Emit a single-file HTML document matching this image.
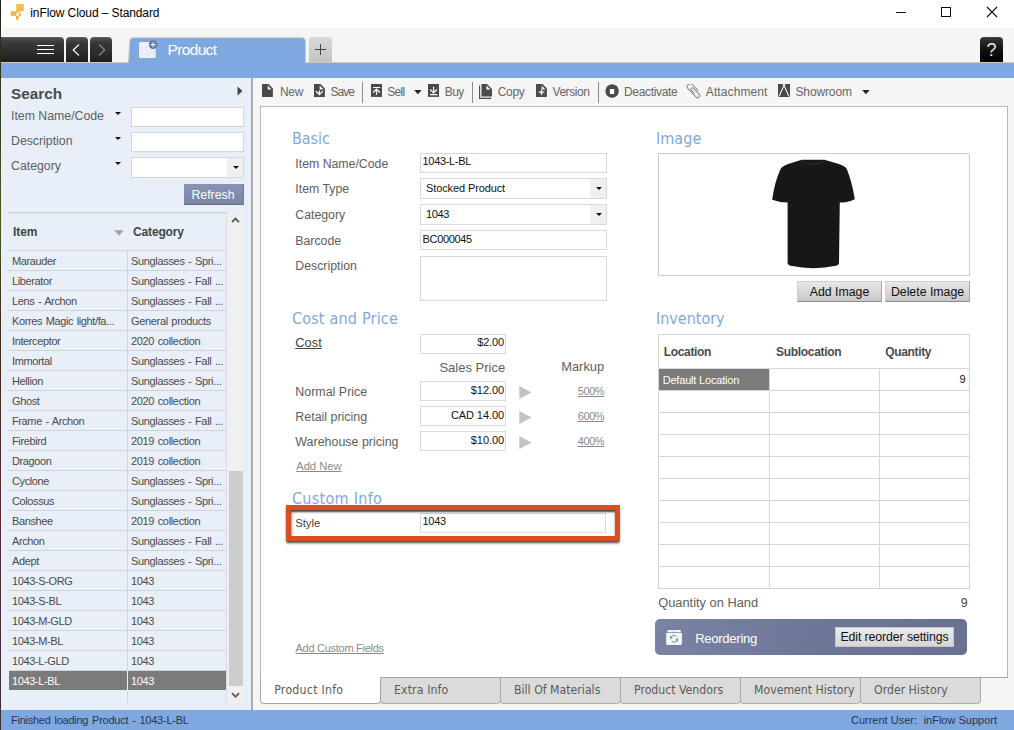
<!DOCTYPE html>
<html lang="en">
<head>
<meta charset="utf-8">
<title>inFlow Cloud – Standard</title>
<style>
*{box-sizing:border-box;margin:0;padding:0}
html,body{width:1014px;height:730px;overflow:hidden;background:#fff}
body{font-family:"Liberation Sans",sans-serif;font-size:12px;color:#505050}
#app{position:absolute;left:0;top:0;width:1014px;height:730px;overflow:hidden}
#app *{position:absolute}
#app svg *{position:static}
.t{white-space:pre;line-height:1;display:block}
.r{text-align:right}
/* title / tab bar */
#titlebar{left:0;top:0;width:1014px;height:28px;background:#fff}
#leftedge{left:0;top:0;width:1px;height:730px;background:linear-gradient(#1c241c,#4a5a20 30%,#3a2a1a 45%,#5a2a3a 70%,#38303a)}
#tabbar{left:2px;top:28px;width:1012px;height:34px;background:#f5f5f5}
#tabline{left:1px;top:62px;width:1013px;height:1px;background:#cfcbc3}
.dk{top:37px;height:25px;background:linear-gradient(#4e4e4e,#383838 22%,#2a2a2a 70%,#1c1c1c);border-radius:4px 4px 0 0;border-top:1px solid #5a5a5a}
#blueband{left:1px;top:63px;width:1013px;height:15px;background:#7fa8e0}
#ptab{left:129px;top:37px;width:177px;height:27px;background:#7fa8e0;border-radius:3px 3px 0 0;border-top:1px solid #cfc9c0;border-left:1px solid #cfc9c0}
#plus{left:309px;top:37px;width:23px;height:25px;background:linear-gradient(#d9d9d9,#c3c3c3);border-radius:3px 3px 0 0}
/* left panel */
#left{left:1px;top:78px;width:250px;height:632px;background:#e9eff9}
#split{left:251px;top:78px;width:2px;height:632px;background:linear-gradient(90deg,#a6a6a6 50%,#b0b0b0 50%)}
.lbl{font-size:12.3px;color:#5e5e5e}
.inp{background:#fff;border:1px solid #d6d6d6}
.arr{width:0;height:0;border-left:3px solid transparent;border-right:3px solid transparent;border-top:3px solid #111}
.row{left:8px;width:218px;height:20px;border-top:1px solid #d3d3d3}
.row .c1{left:4px;top:5px;font-size:11px;letter-spacing:-0.38px;word-spacing:0.9px;color:#4a4a4a}
.row .c2{left:123px;top:5px;font-size:11px;letter-spacing:-0.33px;word-spacing:0.8px;color:#4a4a4a}
.row .vs{left:119px;top:0;width:1px;height:19px;background:#d3d3d3}
.row.sel{background:linear-gradient(#7b7b7b,#7b7b7b) no-repeat 1px 0/217px 100%}
.row.sel .c1,.row.sel .c2{color:#fff}
.row.sel .vs{background:#e9eff9}
/* main */
#main{left:253px;top:78px;width:761px;height:632px;background:#f5f5f5}
#content{left:260px;top:106px;width:748px;height:572px;background:#fff;border:1px solid #b9b9b9;border-bottom-color:#a4a4a4}
.tb{font-size:12px;color:#666}
.sep{width:1px;height:21px;background:#8c8c8c;top:82px}
.h{font-size:16px;color:#7fa8e0;font-family:"DejaVu Sans Condensed","DejaVu Sans","Liberation Sans",sans-serif;font-stretch:condensed}
.fl{font-size:12.3px;color:#5e5e5e}
.fi{background:#fff;border:1px solid #d9d9d9}
.fv{font-size:11px;color:#111;letter-spacing:-0.34px}
.cb{width:17px;background:#f0f0f0}
.btn{background:linear-gradient(#e8e8e8,#d4d4d4 60%,#c8c8c8);border:1px solid #cfcfcf;border-bottom:1px solid #8a8a8a;border-right:1px solid #a8a8a8}
.btn .t{font-size:12.3px;color:#111;left:0;width:100%;text-align:center}
.gh{background:#d6d6d6}
.btab{background:#dbdbdb;border:1px solid #ababab;border-top:1px solid #a4a4a4;border-radius:0 0 4px 4px}
.bt{font-family:"DejaVu Sans Condensed","DejaVu Sans","Liberation Sans",sans-serif;font-stretch:condensed;font-size:12.3px;color:#5a5a5a}
#status{left:1px;top:710px;width:1013px;height:20px;background:#7fa8e0}
.st{font-size:11px;color:#2c3550}
</style>
</head>
<body>
<div id="app">
<div id="titlebar"></div>
<svg style="left:10px;top:3px" width="16" height="18" viewBox="0 0 16 18">
<defs><linearGradient id="ig" x1="0" y1="0" x2="1" y2="1"><stop offset="0" stop-color="#f7cf62"/><stop offset="1" stop-color="#eeb23a"/></linearGradient></defs>
<rect x="6" y="1" width="7.7" height="7.2" fill="url(#ig)"/>
<rect x="0.8" y="8.2" width="4.4" height="4.8" fill="#f1b946"/>
<path d="M5 8.2H9.8V9.7H7.2L6.4 10.5V13H5z" fill="#f0b541"/>
<circle cx="10" cy="11.6" r="1.25" fill="#f0b541"/>
<path d="M10 11.6L7.3 14.2" stroke="#f0b541" stroke-width="1.6" fill="none"/>
<rect x="6" y="13" width="2.4" height="3.8" fill="#efb03a"/>
</svg>
<span class="t " style="left:30.3px;top:6.84px;font-size:12px;color:#000;letter-spacing:-0.1px">inFlow Cloud – Standard</span>
<div class="" style="left:896px;top:12px;width:10px;height:1px;background:#111"></div>
<div class="" style="left:941px;top:7px;width:10px;height:10px;border:1px solid #111"></div>
<svg style="left:986px;top:6px" width="12" height="12" viewBox="0 0 12 12"><path d="M1 1l10 10M11 1L1 11" stroke="#111" stroke-width="1.1" fill="none"/></svg>
<div id="tabbar"></div><div id="tabline"></div><div id="blueband"></div>
<div class="dk" style="left:1px;top:37px;width:63px;height:25px;border-radius:0 4px 0 0"></div>
<div class="" style="left:37px;top:45px;width:17px;height:1px;background:#fff"></div><div class="" style="left:37px;top:49px;width:17px;height:1px;background:#fff"></div><div class="" style="left:37px;top:53px;width:17px;height:1px;background:#fff"></div>
<div class="dk" style="left:66px;top:37px;width:22px;height:25px;"></div>
<svg style="left:72px;top:44px" width="8" height="12" viewBox="0 0 8 12"><path d="M7 0.5L1.2 6L7 11.5" stroke="#fff" stroke-width="1.1" fill="none"/></svg>
<div class="dk" style="left:90px;top:37px;width:22px;height:25px;"></div>
<svg style="left:98px;top:44px" width="8" height="12" viewBox="0 0 8 12"><path d="M1 0.5L6.8 6L1 11.5" stroke="#8e8e8e" stroke-width="1.1" fill="none"/></svg>
<svg style="left:127px;top:36px" width="181" height="28" viewBox="0 0 181 28"><path d="M1.5 27.5L2.7 5Q3 1.7 6 1.7H176.2L178.5 4V27.5z" fill="#7fa8e0"/><path d="M1.5 26.2L2.7 5Q3 1.7 6 1.7H176.2L178.5 4V26.2" fill="none" stroke="#d3cdc3" stroke-width="1"/></svg>
<svg style="left:137px;top:39px" width="22" height="22" viewBox="0 0 22 22">
<rect x="2" y="3.6" width="16.8" height="16.4" rx="1.5" fill="#6f90c8"/>
<rect x="2" y="3" width="16.8" height="16.2" rx="1.5" fill="#e9effa"/>
<rect x="2.5" y="5.4" width="15.8" height="0.8" fill="#f8faff"/>
<circle cx="16.1" cy="5.6" r="4.3" fill="#68759a"/>
<path d="M16.1 3v5.2M13.5 5.6h5.2" stroke="#f4f6fb" stroke-width="1.1"/>
</svg>
<span class="t " style="left:167.5px;top:42.08px;font-size:15.5px;color:#fff;letter-spacing:-0.65px">Product</span>
<div id="plus"></div>
<div class="" style="left:315px;top:49px;width:11px;height:1px;background:#444"></div><div class="" style="left:320px;top:44px;width:1px;height:11px;background:#444"></div>
<div class="dk" style="left:980px;top:37px;width:23px;height:25px;background:linear-gradient(#333,#111 50%,#000);border-top-color:#444"></div>
<span class="t " style="left:0px;top:40.96px;font-size:18px;color:#e8e8e8;left:980px;width:23px;text-align:center">?</span>
<div id="left"></div><div id="split"></div>
<span class="t " style="left:11px;top:86.45px;font-size:15.3px;font-weight:bold;color:#4a4a4a">Search</span>
<svg style="left:237.3px;top:85.8px" width="6" height="10" viewBox="0 0 6 10"><path d="M0.5 0.5L5.5 5L0.5 9.5z" fill="#444"/></svg>
<span class="t lbl" style="left:11px;top:109.59px;font-size:12.3px;">Item Name/Code</span>
<div class="arr" style="left:114.6px;top:111.8px;width:6px;height:3px;width:0;height:0"></div>
<span class="t lbl" style="left:11px;top:134.59px;font-size:12.3px;">Description</span>
<div class="arr" style="left:114.6px;top:136.8px;width:6px;height:3px;width:0;height:0"></div>
<span class="t lbl" style="left:11px;top:159.59px;font-size:12.3px;">Category</span>
<div class="arr" style="left:114.6px;top:161.8px;width:6px;height:3px;width:0;height:0"></div>
<div class="inp" style="left:131px;top:107px;width:113px;height:20px;"></div>
<div class="inp" style="left:131px;top:132px;width:113px;height:20px;"></div>
<div class="inp" style="left:131px;top:157px;width:113px;height:21px;"></div>
<div class="" style="left:227px;top:158px;width:16px;height:19px;background:#f0f0f0"></div>
<div class="arr" style="left:232.5px;top:166px;width:6px;height:3px;width:0;height:0"></div>
<div class="" style="left:184px;top:184px;width:60px;height:21px;background:linear-gradient(#8a93b3,#7a84a6);border-bottom:1px solid #6a6a6e;border-right:1px solid #727b9c"></div>
<span class="t " style="left:0px;top:188.89px;font-size:12.3px;left:183px;width:60px;text-align:center;color:#fff">Refresh</span>
<div class="" style="left:8px;top:212px;width:219px;height:1px;background:#d0d0d0"></div>
<div class="" style="left:8px;top:213px;width:219px;height:1px;background:#e2e4e8"></div>
<span class="t " style="left:13px;top:226.34px;font-size:12px;font-weight:bold;color:#444;letter-spacing:-0.1px">Item</span>
<svg style="left:114px;top:229.5px" width="10" height="6" viewBox="0 0 10 6"><path d="M0.3 0.3h9.4L5 5.7z" fill="#a2a2a2"/></svg>
<span class="t " style="left:133px;top:226.34px;font-size:12px;font-weight:bold;color:#444;letter-spacing:-0.15px">Category</span>
<div class="row" style="top:250px"><span class="t c1">Marauder</span><i class="vs"></i><span class="t c2">Sunglasses - Spri...</span></div>
<div class="row" style="top:270px"><span class="t c1">Liberator</span><i class="vs"></i><span class="t c2">Sunglasses - Fall ...</span></div>
<div class="row" style="top:290px"><span class="t c1">Lens - Archon</span><i class="vs"></i><span class="t c2">Sunglasses - Fall ...</span></div>
<div class="row" style="top:310px"><span class="t c1">Korres Magic light/fa...</span><i class="vs"></i><span class="t c2">General products</span></div>
<div class="row" style="top:330px"><span class="t c1">Interceptor</span><i class="vs"></i><span class="t c2">2020 collection</span></div>
<div class="row" style="top:350px"><span class="t c1">Immortal</span><i class="vs"></i><span class="t c2">Sunglasses - Fall ...</span></div>
<div class="row" style="top:370px"><span class="t c1">Hellion</span><i class="vs"></i><span class="t c2">Sunglasses - Spri...</span></div>
<div class="row" style="top:390px"><span class="t c1">Ghost</span><i class="vs"></i><span class="t c2">2020 collection</span></div>
<div class="row" style="top:410px"><span class="t c1">Frame - Archon</span><i class="vs"></i><span class="t c2">Sunglasses - Fall ...</span></div>
<div class="row" style="top:430px"><span class="t c1">Firebird</span><i class="vs"></i><span class="t c2">2019 collection</span></div>
<div class="row" style="top:450px"><span class="t c1">Dragoon</span><i class="vs"></i><span class="t c2">2019 collection</span></div>
<div class="row" style="top:470px"><span class="t c1">Cyclone</span><i class="vs"></i><span class="t c2">Sunglasses - Spri...</span></div>
<div class="row" style="top:490px"><span class="t c1">Colossus</span><i class="vs"></i><span class="t c2">Sunglasses - Spri...</span></div>
<div class="row" style="top:510px"><span class="t c1">Banshee</span><i class="vs"></i><span class="t c2">2019 collection</span></div>
<div class="row" style="top:530px"><span class="t c1">Archon</span><i class="vs"></i><span class="t c2">Sunglasses - Fall ...</span></div>
<div class="row" style="top:550px"><span class="t c1">Adept</span><i class="vs"></i><span class="t c2">Sunglasses - Spri...</span></div>
<div class="row" style="top:570px"><span class="t c1">1043-S-ORG</span><i class="vs"></i><span class="t c2">1043</span></div>
<div class="row" style="top:590px"><span class="t c1">1043-S-BL</span><i class="vs"></i><span class="t c2">1043</span></div>
<div class="row" style="top:610px"><span class="t c1">1043-M-GLD</span><i class="vs"></i><span class="t c2">1043</span></div>
<div class="row" style="top:630px"><span class="t c1">1043-M-BL</span><i class="vs"></i><span class="t c2">1043</span></div>
<div class="row" style="top:650px"><span class="t c1">1043-L-GLD</span><i class="vs"></i><span class="t c2">1043</span></div>
<div class="row sel" style="top:670px"><span class="t c1">1043-L-BL</span><i class="vs"></i><span class="t c2">1043</span></div>
<div class="row" style="top:690px;height:13px;border-top-color:transparent"><i class="vs" style="height:12px"></i></div>
<div class="" style="left:226px;top:213px;width:1px;height:490px;background:#dadcdf"></div>
<div class="" style="left:227px;top:212px;width:17px;height:491px;background:#f0f0f0"></div>
<div class="" style="left:228.5px;top:471px;width:14.5px;height:215px;background:#cdcdcd"></div>
<svg style="left:230px;top:216px" width="11" height="8" viewBox="0 0 11 8"><path d="M2 6.2L5.5 2.6L9 6.2" stroke="#555" stroke-width="1.8" fill="none"/></svg>
<svg style="left:230px;top:690.5px" width="11" height="8" viewBox="0 0 11 8"><path d="M2 2.2L5.5 5.8L9 2.2" stroke="#555" stroke-width="1.8" fill="none"/></svg>
<div id="main"></div>
<svg style="left:262px;top:84px" width="12" height="13" viewBox="0 0 12 13"><path d="M0 0H6.5L10.9 4.6V13H0z" fill="#4a4a4a"/><path d="M5.7 1.5V5.4H9.4z" fill="#fafafa"/></svg>
<span class="t tb" style="left:280px;top:85.64px;font-size:12px;letter-spacing:-0.3px">New</span>
<svg style="left:314px;top:84px" width="12" height="13" viewBox="0 0 12 13"><path d="M0 0H6.5L10.9 4.6V13H0z" fill="#4a4a4a"/><path d="M5.7 1.5V5.4H9.4z" fill="#fafafa"/><path d="M5.4 6.6v4M2 7.2l3.4 3.5l3.4-3.5" stroke="#fff" stroke-width="1.25" fill="none"/></svg>
<span class="t tb" style="left:330.4px;top:85.64px;font-size:12px;letter-spacing:-0.95px">Save</span>
<div class="sep" style="left:362px;top:82px;width:1px;height:21px;"></div>
<svg style="left:371px;top:84px" width="11" height="13" viewBox="0 0 11 13"><rect width="11" height="12.9" fill="#4a4a4a"/><path d="M1.9 3.5h7.3M5.5 11V5.4M2.1 8.5l3.4-3.3l3.4 3.3" stroke="#fff" stroke-width="1.2" fill="none"/></svg>
<span class="t tb" style="left:387.3px;top:85.64px;font-size:12px;letter-spacing:-0.75px">Sell</span>
<svg style="left:413.5px;top:90px" width="8" height="5" viewBox="0 0 8 5"><path d="M0.2 0h7.4L3.9 4.3z" fill="#222"/></svg>
<svg style="left:428px;top:84px" width="11" height="13" viewBox="0 0 11 13"><rect width="11" height="12.9" fill="#4a4a4a"/><path d="M2 10.6h7.3M5.6 2.7V8.6M2.2 5.5l3.4 3.3l3.4-3.3" stroke="#fff" stroke-width="1.2" fill="none"/></svg>
<span class="t tb" style="left:444.8px;top:85.64px;font-size:12px;letter-spacing:-0.6px">Buy</span>
<div class="sep" style="left:472px;top:82px;width:1px;height:21px;"></div>
<svg style="left:479px;top:84px" width="14" height="15" viewBox="0 0 14 15"><path d="M0.6 1.5V14.4H11.6V13.4" stroke="#4a4a4a" stroke-width="1.1" fill="none"/><path d="M2.5 0H8L13 5V12.6H2.5z" fill="#4a4a4a"/><path d="M7.4 1.5V5.6H11.4z" fill="#fafafa"/></svg>
<span class="t tb" style="left:497.8px;top:85.64px;font-size:12px;letter-spacing:-0.35px">Copy</span>
<svg style="left:536px;top:84px" width="12" height="13" viewBox="0 0 12 13"><path d="M0 0H6.5L10.9 4.6V13H0z" fill="#4a4a4a"/><path d="M5.7 1.5V5.4H9.4z" fill="#fafafa"/><path d="M5.5 5.4v5.6M2.7 8.2h5.6" stroke="#fff" stroke-width="1.3" fill="none"/></svg>
<span class="t tb" style="left:552.5px;top:85.64px;font-size:12px;letter-spacing:-0.45px">Version</span>
<div class="sep" style="left:598px;top:82px;width:1px;height:21px;"></div>
<svg style="left:605px;top:84px" width="14" height="14" viewBox="0 0 14 14"><circle cx="7.1" cy="6.9" r="6.75" fill="#4a4a4a"/><rect x="4.9" y="5" width="4.3" height="5" fill="#fff"/></svg>
<span class="t tb" style="left:624px;top:85.64px;font-size:12px;letter-spacing:-0.33px">Deactivate</span>
<svg style="left:686px;top:84px" width="15" height="15" viewBox="0 0 15 15"><g transform="translate(1.1,3.9) rotate(-44.4)"><path d="M6 9.8V1.5A3 3 0 0 0 0 1.5V12.9A2.1 2.1 0 0 0 4.2 12.9V4.5A1.35 1.35 0 0 0 1.5 4.5V9.3" stroke="#858585" stroke-width="1" fill="none"/></g></svg>
<span class="t tb" style="left:705.8px;top:85.64px;font-size:12px;letter-spacing:0.1px">Attachment</span>
<svg style="left:778px;top:84px" width="12" height="13" viewBox="0 0 12 13"><path d="M0 0H12V12L11 13H1L0 12z" fill="#4a4a4a"/><path d="M5.1 0h1.8v3h-1.8z" fill="#fafafa"/><path d="M5.4 2.6L1.3 12M6.6 2.6L10.7 12" stroke="#fafafa" stroke-width="1.1" fill="none"/></svg>
<span class="t tb" style="left:795.5px;top:85.64px;font-size:12px;letter-spacing:-0.13px">Showroom</span>
<svg style="left:861.5px;top:90px" width="8" height="5" viewBox="0 0 8 5"><path d="M0.2 0h7.4L3.9 4.3z" fill="#222"/></svg>
<div id="content"></div>
<span class="t h" style="left:291.9px;top:131.26px;font-size:16px;">Basic</span>
<span class="t fl" style="left:295.3px;top:157.59px;font-size:12.3px;">Item Name/Code</span>
<span class="t fl" style="left:295.3px;top:182.59px;font-size:12.3px;">Item Type</span>
<span class="t fl" style="left:295.3px;top:209.09px;font-size:12.3px;">Category</span>
<span class="t fl" style="left:295.3px;top:235.09px;font-size:12.3px;">Barcode</span>
<span class="t fl" style="left:295.3px;top:260.09px;font-size:12.3px;">Description</span>
<div class="fi" style="left:420px;top:153px;width:187px;height:20px;"></div>
<span class="t fv" style="left:422.6px;top:156.49px;font-size:11px;">1043-L-BL</span>
<div class="fi" style="left:420px;top:178px;width:187px;height:21px;"></div>
<div class="cb" style="left:590px;top:179px;width:16px;height:19px;"></div>
<div class="arr" style="left:596px;top:187px;width:6px;height:3px;width:0;height:0"></div>
<span class="t fv" style="left:426px;top:183.09px;font-size:11px;letter-spacing:-0.11px">Stocked Product</span>
<div class="fi" style="left:420px;top:204px;width:187px;height:21px;"></div>
<div class="cb" style="left:590px;top:205px;width:16px;height:19px;"></div>
<div class="arr" style="left:596px;top:213px;width:6px;height:3px;width:0;height:0"></div>
<span class="t fv" style="left:426px;top:209.09px;font-size:11px;">1043</span>
<div class="fi" style="left:420px;top:230px;width:187px;height:20px;"></div>
<span class="t fv" style="left:422.6px;top:233.69px;font-size:11px;">BC000045</span>
<div class="fi" style="left:420px;top:256px;width:187px;height:45px;"></div>
<span class="t h" style="left:291.9px;top:311.26px;font-size:16px;letter-spacing:0.2px">Cost and Price</span>
<span class="t fl" style="left:295.3px;top:336.78px;font-size:12.9px;text-decoration:underline;color:#444">Cost</span>
<div class="fi" style="left:420px;top:334px;width:86px;height:20px;"></div>
<span class="t fv r" style="right:510.00px;top:337.29px;font-size:11px;letter-spacing:-0.15px">$2.00</span>
<span class="t fl" style="left:439.4px;top:360.80px;font-size:13px;">Sales Price</span>
<span class="t fl" style="left:561.2px;top:360.98px;font-size:12.9px;">Markup</span>
<span class="t fl" style="left:295.3px;top:385.96px;font-size:12.45px;">Normal Price</span>
<div class="fi" style="left:420px;top:381px;width:86px;height:20px;"></div>
<span class="t fv r" style="right:510.00px;top:384.69px;font-size:11px;letter-spacing:-0.08px">$12.00</span>
<svg style="left:519px;top:385.5px" width="13" height="13" viewBox="0 0 13 13"><path d="M0.3 0L12.5 6.5L0.3 13z" fill="#c3c3c3"/></svg>
<span class="t fv r" style="right:409.80px;top:385.69px;font-size:11px;color:#8a8a8a;text-decoration:underline;letter-spacing:-0.45px">500%</span>
<span class="t fl" style="left:295.3px;top:410.96px;font-size:12.45px;">Retail pricing</span>
<div class="fi" style="left:420px;top:406px;width:86px;height:20px;"></div>
<span class="t fv r" style="right:510.00px;top:409.69px;font-size:11px;letter-spacing:-0.08px">CAD 14.00</span>
<svg style="left:519px;top:410.5px" width="13" height="13" viewBox="0 0 13 13"><path d="M0.3 0L12.5 6.5L0.3 13z" fill="#c3c3c3"/></svg>
<span class="t fv r" style="right:409.80px;top:410.69px;font-size:11px;color:#8a8a8a;text-decoration:underline;letter-spacing:-0.45px">600%</span>
<span class="t fl" style="left:295.3px;top:435.96px;font-size:12.45px;">Warehouse pricing</span>
<div class="fi" style="left:420px;top:431px;width:86px;height:20px;"></div>
<span class="t fv r" style="right:510.00px;top:434.69px;font-size:11px;letter-spacing:-0.08px">$10.00</span>
<svg style="left:519px;top:435.5px" width="13" height="13" viewBox="0 0 13 13"><path d="M0.3 0L12.5 6.5L0.3 13z" fill="#c3c3c3"/></svg>
<span class="t fv r" style="right:409.80px;top:435.69px;font-size:11px;color:#8a8a8a;text-decoration:underline;letter-spacing:-0.45px">400%</span>
<span class="t fl" style="left:296.2px;top:460.72px;font-size:11.2px;text-decoration:underline;color:#8a8a8a">Add New</span>
<span class="t h" style="left:291.9px;top:491.26px;font-size:16px;letter-spacing:0.3px">Custom Info</span>
<span class="t fl" style="left:295.3px;top:518.05px;font-size:11.4px;color:#444;letter-spacing:-0.1px">Style</span>
<div class="fi" style="left:420px;top:513px;width:186px;height:20px;"></div>
<span class="t fv" style="left:422.6px;top:516.39px;font-size:11px;">1043</span>
<div class="" style="left:286px;top:505px;width:334px;height:36px;border:5px solid #d94f20;box-shadow:0.3px 2px 2.2px rgba(45,55,60,0.95),inset 0.3px 2px 2.2px rgba(45,55,60,0.95)"></div>
<span class="t fl" style="left:295.5px;top:643.39px;font-size:11px;text-decoration:underline;color:#8a8a8a;letter-spacing:-0.27px">Add Custom Fields</span>
<span class="t h" style="left:655.9px;top:131.26px;font-size:16px;letter-spacing:0.1px">Image</span>
<div class="fi" style="left:658px;top:153px;width:312px;height:123px;border-color:#cdcdcd"></div>
<svg style="left:768px;top:156px" width="92" height="116" viewBox="768 156 92 116">
<path d="M801.8 159.8 L824.4 159.8 L838 163.8 Q844.5 165.5 846.8 169 Q852 182 854.8 199.2 Q848 202.5 839.8 202.6 L839 262.5 Q839 265 836 265.8 Q813.5 270.5 790.5 265.8 Q787.6 265 787.6 262.5 L787.6 202.6 Q779 202.5 772.2 199.8 Q774.5 182 780.6 169 Q783 165.5 789 163.8 Z" fill="#171717"/>
<path d="M801 160.6 Q813 168.5 825.2 160.6" stroke="#2a2a2a" stroke-width="1.2" fill="none"/>
</svg>
<div class="btn" style="left:797px;top:281px;width:85px;height:21px;"><span class="t " style="left:0px;top:4.19px;font-size:12.3px;">Add Image</span></div>
<div class="btn" style="left:885px;top:281px;width:85px;height:21px;"><span class="t " style="left:0px;top:4.19px;font-size:12.3px;">Delete Image</span></div>
<span class="t h" style="left:655.9px;top:311.26px;font-size:16px;">Inventory</span>
<div class="fi" style="left:658px;top:334px;width:312px;height:255px;border-color:#d4d4d4"></div>
<span class="t " style="left:663.7px;top:345.64px;font-size:12px;font-weight:bold;color:#4a4a4a;letter-spacing:-0.33px">Location</span>
<span class="t " style="left:776px;top:345.64px;font-size:12px;font-weight:bold;color:#4a4a4a;letter-spacing:-0.3px">Sublocation</span>
<span class="t " style="left:885.2px;top:345.64px;font-size:12px;font-weight:bold;color:#4a4a4a;letter-spacing:-0.33px">Quantity</span>
<div class="gh" style="left:659px;top:368px;width:310px;height:1px;"></div>
<div class="gh" style="left:659px;top:390px;width:310px;height:1px;"></div>
<div class="gh" style="left:659px;top:412px;width:310px;height:1px;"></div>
<div class="gh" style="left:659px;top:434px;width:310px;height:1px;"></div>
<div class="gh" style="left:659px;top:456px;width:310px;height:1px;"></div>
<div class="gh" style="left:659px;top:478px;width:310px;height:1px;"></div>
<div class="gh" style="left:659px;top:500px;width:310px;height:1px;"></div>
<div class="gh" style="left:659px;top:522px;width:310px;height:1px;"></div>
<div class="gh" style="left:659px;top:544px;width:310px;height:1px;"></div>
<div class="gh" style="left:659px;top:566px;width:310px;height:1px;"></div>
<div class="gh" style="left:769px;top:368px;width:1px;height:220px;"></div>
<div class="gh" style="left:879px;top:368px;width:1px;height:220px;"></div>
<div class="" style="left:659px;top:369px;width:110px;height:21px;background:#7b7b7b"></div>
<span class="t " style="left:662.7px;top:375.09px;font-size:11px;color:#fff;letter-spacing:-0.19px">Default Location</span>
<span class="t fv r" style="right:48.70px;top:374.19px;font-size:11px;">9</span>
<span class="t fl" style="left:658.2px;top:596.72px;font-size:12.85px;">Quantity on Hand</span>
<span class="t fl r" style="right:46.50px;top:597.19px;font-size:12.3px;color:#444">9</span>
<div class="" style="left:655px;top:619px;width:312px;height:36px;background:linear-gradient(100deg,#7a83a3,#6e7797 50%,#687191);border-radius:5px"></div>
<svg style="left:665px;top:628px" width="18" height="18" viewBox="0 0 18 18">
<path d="M2.9 2.1H15.3L16.1 4.2H2.1z" fill="#f4f5f9"/>
<rect x="8.6" y="2.1" width="0.9" height="2.1" fill="#b9bed0"/>
<path d="M1.2 5H16.9V15.8Q16.9 17 15.7 17H2.4Q1.2 17 1.2 15.8z" fill="#f4f5f9"/>
<path d="M5.7 11.4a3.4 3.4 0 0 1 5.6-3.1M12.4 10.2a3.4 3.4 0 0 1-5.7 3" stroke="#737c9c" stroke-width="1" fill="none"/>
<path d="M5.4 7.4v2.6h2.5zM12.7 14v-2.6h-2.5z" fill="#737c9c"/>
</svg>
<span class="t " style="left:695.2px;top:631.61px;font-size:13.1px;color:#fff;letter-spacing:-0.3px">Reordering</span>
<div class="" style="left:835px;top:627px;width:119px;height:20px;background:linear-gradient(#ececec,#d6d6d6);border:1px solid #c6c6c6"></div>
<span class="t " style="left:0px;top:631.19px;font-size:12.3px;left:835px;width:119px;text-align:center;color:#111;letter-spacing:-0.1px">Edit reorder settings</span>
<div class="btab" style="left:380px;top:677px;width:121px;height:27px;"></div>
<span class="t bt" style="left:394px;top:684.28px;font-size:12.2px;letter-spacing:0.12px">Extra Info</span>
<div class="btab" style="left:500px;top:677px;width:121px;height:27px;"></div>
<span class="t bt" style="left:514px;top:684.28px;font-size:12.2px;">Bill Of Materials</span>
<div class="btab" style="left:620px;top:677px;width:121px;height:27px;"></div>
<span class="t bt" style="left:634px;top:684.28px;font-size:12.2px;">Product Vendors</span>
<div class="btab" style="left:740px;top:677px;width:121px;height:27px;"></div>
<span class="t bt" style="left:754px;top:684.28px;font-size:12.2px;">Movement History</span>
<div class="btab" style="left:860px;top:677px;width:121px;height:27px;"></div>
<span class="t bt" style="left:874px;top:684.28px;font-size:12.2px;">Order History</span>
<div class="" style="left:260px;top:677px;width:121px;height:27px;background:#fff;border:1px solid #a6a6a6;border-top-color:#fff;border-radius:0 0 4px 4px"></div>
<div class="" style="left:260px;top:677px;width:1px;height:5px;background:#b0b0b0"></div>
<span class="t bt" style="left:274.2px;top:684.28px;font-size:12.2px;letter-spacing:0.28px">Product Info</span>
<div id="status"></div>
<span class="t st" style="left:11px;top:714.69px;font-size:11px;letter-spacing:-0.25px;word-spacing:1.1px">Finished loading Product - 1043-L-BL</span>
<span class="t st r" style="right:97.00px;top:714.69px;font-size:11px;">Current User:</span>
<span class="t st r" style="right:17.00px;top:714.69px;font-size:11px;">inFlow Support</span>
<div id="leftedge"></div>
</div>
</body>
</html>
